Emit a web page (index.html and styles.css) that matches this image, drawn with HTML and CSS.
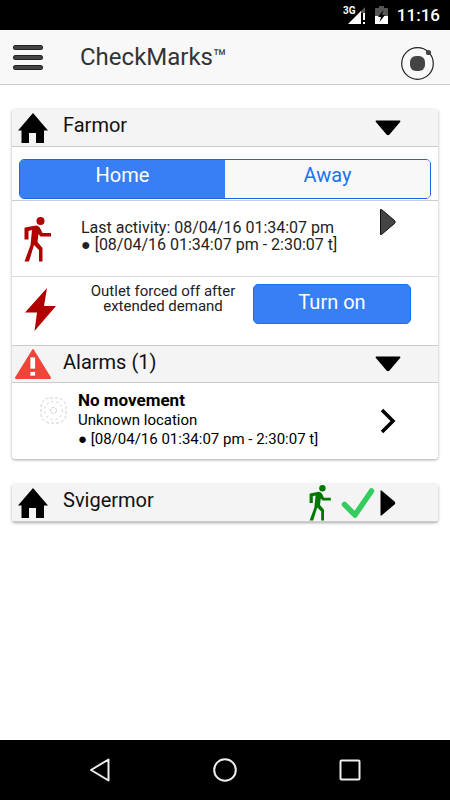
FILE: index.html
```html
<!DOCTYPE html>
<html lang="en">
<head>
<meta charset="utf-8">
<meta name="viewport" content="width=device-width, initial-scale=1">
<title>CheckMarks</title>
<link rel="stylesheet" href="styles.css">
</head>
<body>
<svg width="0" height="0" class="symbols" aria-hidden="true">
  <symbol id="house" viewBox="0 0 30 30"><path d="M15 0 30 17.500H26V30H18V20H11V30H3.500V17.500H0Z"/></symbol>
  <symbol id="walker" viewBox="0 0 27 45"><circle cx="16.500" cy="4" r="4"/><path d="M1 10.500 12 8.500Q15 8.500 16.500 12L18.500 16H27V19.500H16.500L14.500 17L13.500 25L18.500 31V44.500H15V33L10 28L5 44.500H.500L6.500 28L8 13L4.500 14V22.500H.500V11Z"/></symbol>
  <symbol id="triangle" viewBox="0 0 26 16"><path d="M1 .500H25L25.500 1.500 14.500 14.500Q13 16 11.500 14.500L.500 1.500Z"/></symbol>
  <symbol id="triangle-right" viewBox="0 0 16 26"><path d="M.500 .500H1.500L14.500 11.500Q16 13 14.500 14.500L1.500 25.500H.500Z"/></symbol>
</svg>

<div class="status-bar">
  <svg width="23" height="20" viewBox="0 0 23 20" role="img" aria-label="3G signal">
    <path fill="#555" d="M22 2V8H17V7Z"/>
    <path fill="#fff" d="M18 6V19H5Z"/>
    <path fill="#fff" d="M20 8H22V15H20ZM20 17H22V19H20Z"/>
    <text x="0" y="9" class="network">3G</text>
  </svg>
  <svg width="13" height="18" viewBox="0 0 13 18" role="img" aria-label="Battery charging">
    <path fill="#555" d="M4 0H9V2H12Q13 2 13 3V10H0V3Q0 2 1 2H4Z"/>
    <path fill="#fff" d="M0 10H13V18H0Z"/>
    <path d="M8.500 4 3 11H6L4.500 16 10 9H7Z"/>
  </svg>
  <span class="clock">11:16</span>
</div>

<header class="app-bar">
  <button class="icon-button" aria-label="Menu">
    <svg width="30" height="26" viewBox="0 0 30 26"><path d="M2.500 3.500H27.500M2.500 13.500H27.500M2.500 23.500H27.500" stroke="#222" stroke-width="5" stroke-linecap="round"/><path d="M2.500 3.500H27.500M2.500 13.500H27.500M2.500 23.500H27.500" stroke="#444" stroke-width="3" stroke-linecap="round"/></svg>
  </button>
  <h1 class="app-title">CheckMarks<span class="trademark">™</span></h1>
  <button class="icon-button status-button" aria-label="Status">
    <svg width="33" height="33" viewBox="0 0 33 33"><circle cx="16.500" cy="16.500" r="15.800" fill="none" stroke="#222" stroke-width="1.200"/><rect x="9" y="9" width="15" height="15" rx="6" fill="#444"/><circle cx="27.500" cy="5.500" r="2.600" fill="#444"/></svg>
  </button>
</header>

<main class="content">
  <section class="card">
    <button class="card-head" aria-expanded="true">
      <span class="lead"><svg width="30" height="30"><use href="#house"/></svg></span>
      <span class="head-label">Farmor</span>
      <span class="trail"><svg width="26" height="16"><use href="#triangle"/></svg></span>
    </button>
    <div class="mode-row">
      <div class="segments" role="group" aria-label="Mode">
        <button class="segment selected" aria-pressed="true">Home</button>
        <button class="segment" aria-pressed="false">Away</button>
      </div>
    </div>
    <button class="activity-row">
      <svg class="red" width="27" height="45"><use href="#walker"/></svg>
      <span class="activity-text">Last activity: 08/04/16 01:34:07 pm<br>● [08/04/16 01:34:07 pm - 2:30:07 t]</span>
      <span class="trail"><svg class="gray" width="16" height="26"><use href="#triangle-right"/></svg></span>
    </button>
    <div class="outlet-row">
      <svg class="red" width="31" height="43" viewBox="0 0 31 43"><path d="M22 0 0 24.500H12L9.500 43 31 18H19Z"/></svg>
      <p class="outlet-text">Outlet forced off after extended demand</p>
      <button class="turn-on">Turn on</button>
    </div>
    <button class="card-head alarm-head" aria-expanded="true">
      <span class="lead"><svg width="36" height="30" viewBox="0 0 36 30"><path fill="#f04438" d="M18 0Q18.500 0 19 1L36 28.500Q36 30 35 30H1Q0 30 0 28.500L17 1Q17.500 0 18 0Z"/><path fill="#fff" stroke="#c5372e" stroke-width=".6" d="M15 8H20.500V20H15ZM15 22.500H20.500V27H15Z"/></svg></span>
      <span class="head-label">Alarms (1)</span>
      <span class="trail"><svg width="26" height="16"><use href="#triangle"/></svg></span>
    </button>
    <button class="alarm-row">
      <svg width="27" height="27" viewBox="0 0 27 27" fill="none" stroke="#ccc"><rect x="1" y="1" width="25" height="25" rx="9" stroke-dasharray="3 2"/><circle cx="13.500" cy="13.500" r="9" stroke-dasharray="2 3"/><circle cx="13.500" cy="13.500" r="3" stroke-dasharray="3 1"/></svg>
      <span class="alarm-text">
        <strong class="alarm-title">No movement</strong>
        <span>Unknown location</span>
        <span>● [08/04/16 01:34:07 pm - 2:30:07 t]</span>
      </span>
      <span class="trail"><svg width="16" height="26" viewBox="0 0 16 26"><path fill="none" stroke="#000" stroke-width="3.500" d="M2 2 13 13 2 24"/></svg></span>
    </button>
  </section>

  <section class="card">
    <button class="card-head" aria-expanded="false">
      <span class="lead"><svg width="30" height="30"><use href="#house"/></svg></span>
      <span class="head-label">Svigermor</span>
      <span class="badges">
        <svg class="green" width="22" height="36"><use href="#walker"/></svg>
        <svg width="34" height="32" viewBox="0 0 34 32"><path fill="none" stroke="#32cd5c" stroke-width="5.500" stroke-linecap="round" stroke-linejoin="round" d="M3.500 17.500 14 28 30.500 4"/></svg>
      </span>
      <span class="trail"><svg width="16" height="26"><use href="#triangle-right"/></svg></span>
    </button>
  </section>
</main>

<nav class="nav-bar" aria-label="System">
  <button class="nav-button" aria-label="Back"><svg width="24" height="24" viewBox="0 0 24 24"><path d="M20.500 1.500V22.500L3 12Z"/></svg></button>
  <button class="nav-button" aria-label="Home"><svg width="24" height="24" viewBox="0 0 24 24"><circle cx="12" cy="12" r="10.800"/></svg></button>
  <button class="nav-button" aria-label="Recent apps"><svg width="24" height="24" viewBox="0 0 24 24"><rect x="2.500" y="2.500" width="19" height="19" rx="1"/></svg></button>
</nav>
</body>
</html>
```
FILE: styles.css
```css
* {
  box-sizing: border-box;
}

body {
  display: flex;
  flex-direction: column;
  min-height: 100vh;
  margin: 0;
  background: #fff;
  color: #000;
  font-family: Roboto, "Liberation Sans", sans-serif;
}

button {
  margin: 0;
  padding: 0;
  border: 0;
  background: none;
  color: inherit;
  font: inherit;
  text-align: left;
  cursor: pointer;
}

svg {
  display: block;
  flex: none;
}

.symbols {
  position: absolute;
}

.red {
  fill: #b00000;
}

.green {
  fill: #007800;
}

.gray {
  fill: #444;
  stroke: #111;
}

.status-bar {
  display: flex;
  justify-content: flex-end;
  align-items: center;
  gap: 9px;
  height: 30px;
  padding-right: 10px;
  background: #000;
  color: #fff;
}

.network {
  fill: #fff;
  font-size: 10px;
  font-weight: 700;
}

.clock {
  font-size: 17px;
  font-weight: 500;
  line-height: 30px;
}

.app-bar {
  display: flex;
  align-items: flex-start;
  height: 55px;
  padding: 13px 16px 0 13px;
  border-bottom: 1px solid #ccc;
  background: #f8f8f8;
}

.icon-button {
  margin-top: 1px;
}

.app-title {
  flex: 1;
  margin: 0 0 0 37px;
  color: #333;
  font-size: 24px;
  font-weight: 400;
  line-height: 28px;
}

.trademark {
  font-size: 22px;
}

.status-button {
  margin-top: 4px;
}

.content {
  display: flex;
  flex: 1;
  flex-direction: column;
  gap: 25px;
  padding: 24px 12px;
}

.card {
  display: flex;
  flex-direction: column;
  border-radius: 3px;
  background: #fff;
  box-shadow: 0 1px 3px rgba(0, 0, 0, 0.35);
}

.card-head {
  display: flex;
  align-items: center;
  height: 38px;
  border-bottom: 1px solid #ccc;
  border-radius: 3px 3px 0 0;
  background: #f4f4f4;
}

.lead {
  display: flex;
  justify-content: center;
  width: 41px;
  margin-right: 10px;
}

.head-label {
  flex: 1;
  padding-bottom: 5px;
  color: #111;
  font-size: 20px;
  line-height: 24px;
}

.trail {
  display: flex;
  flex: none;
  justify-content: center;
  width: 26px;
  margin-right: 37px;
}

.mode-row {
  padding: 12px 7px 1px;
  border-bottom: 1px solid #ccc;
}

.segments {
  display: flex;
  height: 40px;
  overflow: hidden;
  border: 1px solid #1a66e0;
  border-radius: 5px;
}

.segment {
  flex: 1;
  padding-bottom: 8px;
  background: #f8f8f8;
  color: #1a73f0;
  font-size: 20px;
  text-align: center;
}

.segment.selected {
  background: #387ef5;
  color: #fff;
}

.activity-row {
  display: flex;
  align-items: flex-start;
  height: 76px;
  padding: 8px 0 0 12px;
  border-bottom: 1px solid #ddd;
}

.activity-row > .red {
  margin-top: 8px;
}

.activity-text {
  flex: 1;
  margin: 10px 0 0 30px;
  color: #222;
  font-size: 16px;
  line-height: 17px;
}

.outlet-row {
  display: flex;
  align-items: flex-start;
  height: 68px;
  padding: 7px 27px 0 13px;
}

.outlet-row > .red {
  margin-top: 4px;
}

.outlet-text {
  flex: 1;
  margin: 0 14px 0 31px;
  color: #222;
  font-size: 15px;
  line-height: 15px;
  text-align: center;
}

.turn-on {
  width: 158px;
  height: 40px;
  padding-bottom: 4px;
  border: 1px solid #1a73f0;
  border-radius: 5px;
  background: #387ef5;
  color: #fff;
  font-size: 20px;
  text-align: center;
}

.alarm-head {
  border-top: 1px solid #ccc;
  border-radius: 0;
}

.alarm-row {
  display: flex;
  align-items: center;
  height: 76px;
  padding-left: 28px;
}

.alarm-row > svg {
  margin-bottom: 22px;
}

.alarm-text {
  display: flex;
  flex: 1;
  flex-direction: column;
  margin-left: 11px;
  padding-bottom: 4px;
  font-size: 15px;
  line-height: 19px;
}

.alarm-title {
  font-size: 17px;
  line-height: 21px;
}

.badges {
  display: flex;
  align-items: center;
  gap: 10px;
}

.nav-bar {
  display: flex;
  justify-content: center;
  align-items: center;
  gap: 101px;
  height: 60px;
  background: #000;
}

.nav-button svg {
  fill: none;
  stroke: #eee;
  stroke-width: 2;
  stroke-linejoin: round;
}
```
